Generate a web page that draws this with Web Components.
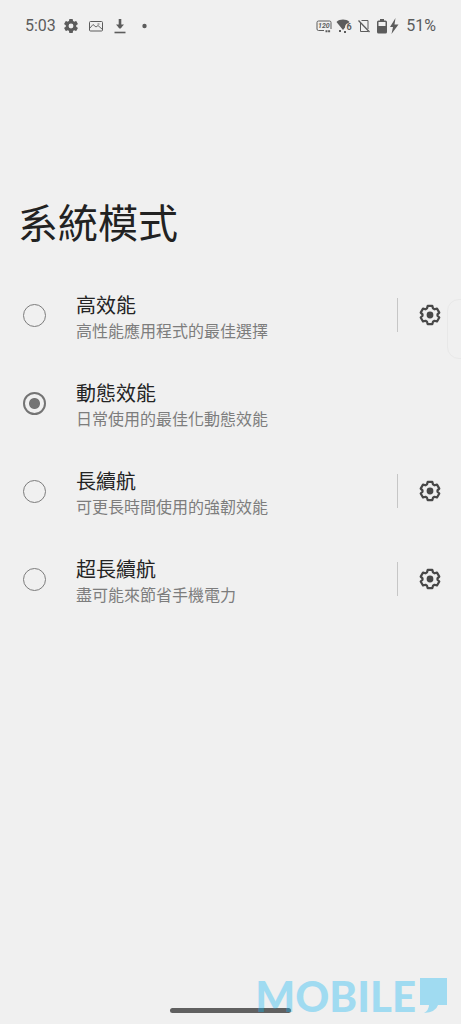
<!DOCTYPE html>
<html lang="zh-Hant">
<head>
<meta charset="utf-8">
<meta name="viewport" content="width=device-width, initial-scale=1">
<title>系統模式</title>
<style>
body { margin: 0; background: #f0f0f0; }
</style>
</head>
<body>
<system-screen></system-screen>

<template id="status-bar">
  <style>
    :host { display: flex; justify-content: space-between; align-items: center; height: 52px; padding: 0 25px; color: #5c5c5c; font: 400 16px/20px Roboto, sans-serif; }
    div { display: flex; align-items: center; }
    .left { gap: 8px; }
    .right { gap: 4px; }
    .percent { margin-left: 3px; }
    svg { display: block; }
    text { font-family: Roboto, sans-serif; font-weight: 700; }
  </style>
  <div class="left">
    <span>5:03</span>
    <svg width="14" height="14" viewBox="2 2 20 20" fill="currentColor"><path fill-rule="evenodd" d="M19.4 13a7.500 7.500 0 0 0 0-2l2.200-1.600a.5.5 0 0 0 .1-.7l-2-3.500a.5.5 0 0 0-.6-.2l-2.500 1a7.300 7.300 0 0 0-1.700-1l-.4-2.600a.5.5 0 0 0-.5-.4h-4a.5.5 0 0 0-.5.4L9.100 5a7.300 7.300 0 0 0-1.700 1l-2.500-1a.5.5 0 0 0-.6.200l-2 3.500a.5.5 0 0 0 .1.700L4.600 11a7.500 7.500 0 0 0 0 2l-2.200 1.600a.5.5 0 0 0-.1.700l2 3.500c.1.200.4.300.6.200l2.500-1c.5.400 1.100.700 1.700 1l.4 2.600c0 .2.200.4.500.4h4c.3 0 .5-.2.500-.4l.4-2.600c.6-.3 1.200-.6 1.700-1l2.500 1c.2.100.5 0 .6-.2l2-3.500a.5.5 0 0 0-.1-.7zM12 15.500a3.500 3.500 0 1 1 0-7 3.500 3.500 0 0 1 0 7z"/></svg>
    <svg width="20" height="14" viewBox="1 0 20 14" fill="none" stroke="currentColor"><rect x="4.500" y="2.500" width="13" height="9.500" rx="1"/><path d="M5 9l3-3.500 3 2.500 2-1.500 4.500 4M12.500 5h2" stroke-width=".9"/></svg>
    <svg width="12" height="16" viewBox="0 0 12 16" fill="none" stroke="currentColor"><path d="M6 1v9" stroke-width="2.600"/><path d="M2 6.500h8L6 11z" fill="currentColor" stroke="none"/><path d="M.5 14.500h11" stroke-width="1.600"/></svg>
    <svg width="18" height="14" viewBox="0 0 18 14" fill="currentColor"><circle cx="10.500" cy="7" r="2.200"/></svg>
  </div>
  <div class="right">
    <svg width="16" height="14" viewBox="0 0 16 14" fill="none" stroke="currentColor"><path d="M8 11.500H2.500a1.500 1.500 0 0 1-1.500-1.500V3.500A1.500 1.500 0 0 1 2.500 2h11A1.500 1.500 0 0 1 15 3.500V10"/><text x="2" y="9.300" font-size="7" font-style="italic" fill="currentColor" stroke="none">120</text><path d="M9.500 12.300h5" stroke-width="2" stroke-dasharray="2 .6"/></svg>
    <svg width="17" height="16" viewBox="0 0 17 16" fill="currentColor"><path d="M.5 4C4 .8 10 .8 13.500 4l-1.500 1.300c-2 .4-3 2-3 4.200L7 12z"/><text x="10.500" y="12" font-size="9">6</text><path d="M3 12h2v2H3zM8 13h2v2H8z"/></svg>
    <svg width="14" height="14" viewBox="0 0 14 14" fill="none" stroke="currentColor"><path d="M4.500 1.500H11V10M3.500 3.500V12.500H11"/><path d="M1.500 1.500l11 11.500" stroke-width="1.300"/></svg>
    <div>
    <svg width="14" height="16" viewBox="1 0 14 16"><path fill="currentColor" fill-rule="evenodd" d="M6 1h4v1.500h1.500q1.500 0 1.500 1.500v10q0 1.500-1.500 1.500h-7Q3 15.500 3 14V4q0-1.500 1.500-1.500H6zM4.500 4v4h7V4z"/></svg>
    <svg width="10" height="16" viewBox="0 0 10 16"><path fill="currentColor" d="M6.500 0L1 9h3l-1.500 7L9.500 6.500h-4z"/></svg>
    </div>
    <span class="percent">51%</span>
  </div>
</template>

<template id="settings-button">
  <style>
    :host { display: flex; align-items: center; }
    .line { width: 1px; height: 34px; background: #c6c6c6; }
    button { display: grid; place-items: center; width: 63px; height: 48px; padding: 0; border: 0; background: none; color: #484848; cursor: pointer; }
  </style>
  <span class="line"></span>
  <button type="button">
    <svg width="22" height="22" viewBox="0 0 22 22" fill="none" stroke="currentColor" stroke-width="2.200" stroke-linejoin="round"><path d="M8.700 1.900h4.600l.7 2.500 1.500.9 2.500-.7 2.300 4-1.800 1.800v1.300l1.800 1.800-2.300 4-2.500-.7-1.500.9-.7 2.500H8.700L8 17.700l-1.500-.9-2.500.7-2.300-4 1.800-1.800v-1.300L1.700 8.600l2.300-4 2.500.7L8 4.400z"/><circle cx="11" cy="11" r="3.400" fill="currentColor" stroke="none"/></svg>
  </button>
</template>

<template id="mode-row">
  <style>
    :host { display: grid; grid-template-columns: 76px 1fr auto; align-items: center; height: 88px; }
    .choice { display: flex; padding-left: 23px; }
    .copy { display: grid; padding-top: 4px; color: #7d7d7d; font-size: 16px; line-height: 24px; }
    .title { color: #242424; font-size: 20px; line-height: 26px; }
  </style>
  <div class="choice"><slot name="choice"></slot></div>
  <div class="copy">
    <div class="title"><slot name="title"></slot></div>
    <div><slot></slot></div>
  </div>
  <slot name="action"></slot>
</template>

<template id="mode-list">
  <style>
    :host { display: block; font-family: "Noto Sans CJK TC", sans-serif; }
    input { appearance: none; box-sizing: border-box; width: 23px; height: 23px; margin: 0; border: 1px solid #7c7c7c; border-radius: 50%; }
    input:checked { border: 2px solid #747474; background: radial-gradient(circle, #747474 5px, transparent 6px); }
  </style>
  <mode-row>
    <input slot="choice" type="radio" name="mode" id="high">
    <label slot="title" for="high">高效能</label>高性能應用程式的最佳選擇
    <settings-button slot="action" label="高效能設定"></settings-button>
  </mode-row>
  <mode-row>
    <input slot="choice" type="radio" name="mode" id="dynamic" checked>
    <label slot="title" for="dynamic">動態效能</label>日常使用的最佳化動態效能
  </mode-row>
  <mode-row>
    <input slot="choice" type="radio" name="mode" id="durable">
    <label slot="title" for="durable">長續航</label>可更長時間使用的強韌效能
    <settings-button slot="action" label="長續航設定"></settings-button>
  </mode-row>
  <mode-row>
    <input slot="choice" type="radio" name="mode" id="ultra">
    <label slot="title" for="ultra">超長續航</label>盡可能來節省手機電力
    <settings-button slot="action" label="超長續航設定"></settings-button>
  </mode-row>
</template>

<template id="brand-mark">
  <style>
    :host { display: flex; align-items: center; gap: 4px; color: #14b7f3; opacity: .36; font: 900 42px/48px Lato, sans-serif; }
    svg { display: block; }
  </style>
  <span>MOBILE</span>
  <svg width="27" height="36" viewBox="0 0 27 36" fill="currentColor"><path d="M0 0h27v27H18q-2 7-14 8 5-3 5-8H0z"/></svg>
</template>

<template id="system-screen">
  <style>
    :host { position: relative; display: flex; flex-direction: column; min-height: 100vh; overflow: hidden; }
    h1 { margin: 140px 18px 21px; color: #222; font: 400 40px/58px "Noto Sans CJK TC", sans-serif; }
    .edge { position: absolute; right: -12px; top: 299px; width: 24px; height: 58px; border: 1px solid #e8e8e8; border-radius: 12px; }
    footer { margin-top: auto; padding-bottom: 11px; }
    .home { width: 121px; height: 5px; margin: 0 auto; border-radius: 3px; background: #606060; }
    brand-mark { position: absolute; right: 14px; bottom: 4px; }
  </style>
  <status-bar></status-bar>
  <h1>系統模式</h1>
  <mode-list></mode-list>
  <div class="edge"></div>
  <footer><div class="home"></div></footer>
  <brand-mark></brand-mark>
</template>

<script>
class TemplateElement extends HTMLElement {
  constructor() {
    super();
    const template = document.getElementById(this.localName);
    this.attachShadow({ mode: "open" }).append(template.content.cloneNode(true));
  }
}
class StatusBar extends TemplateElement {}
class SettingsButton extends TemplateElement {
  connectedCallback() {
    this.shadowRoot.querySelector("button").setAttribute("aria-label", this.getAttribute("label"));
  }
}
class ModeRow extends TemplateElement {}
class ModeList extends TemplateElement {}
class BrandMark extends TemplateElement {}
class SystemScreen extends TemplateElement {}
customElements.define("status-bar", StatusBar);
customElements.define("settings-button", SettingsButton);
customElements.define("mode-row", ModeRow);
customElements.define("mode-list", ModeList);
customElements.define("brand-mark", BrandMark);
customElements.define("system-screen", SystemScreen);
</script>
</body>
</html>
